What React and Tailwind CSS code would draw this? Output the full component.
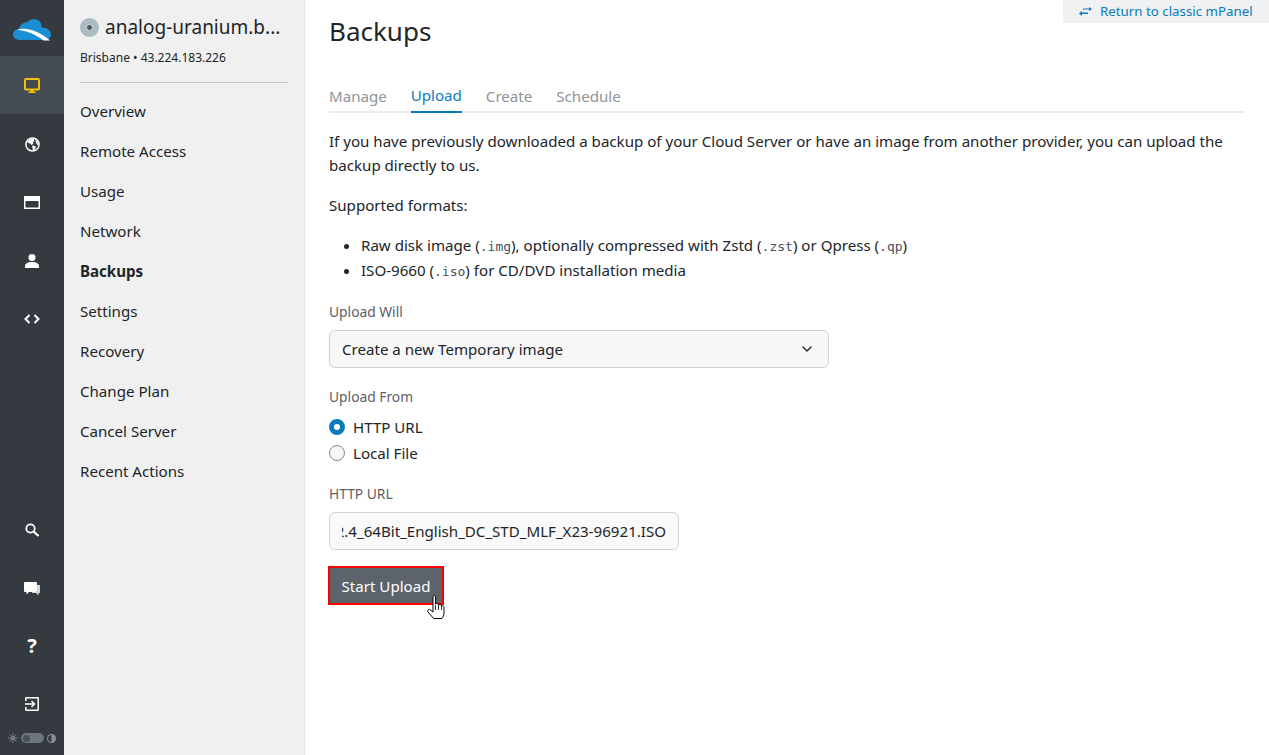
import React from "react";
import { ChevronDown } from "lucide-react";

const font = { fontFamily: '"Noto Sans", "Open Sans", sans-serif' };

const navItems = ["Overview", "Remote Access", "Usage", "Network", "Backups", "Settings", "Recovery", "Change Plan", "Cancel Server", "Recent Actions"];
const tabs = ["Manage", "Upload", "Create", "Schedule"];

function Cloud() {
  return (
    <svg width="38" height="22" viewBox="0 0 38 22">
      <path d="M7 21C2.5 21 0 18.5 0 15.5C0 12.5 2.5 10 6 10C7 5.5 10.5 3 14 3.5C16 .5 19.5 -.5 23 .5C27 1.5 29 5 28.5 8.5C33 8 38 11 38 15.5C38 19 35.5 21 32 21Z" fill="#1c8fd3" />
      <path d="M4 10.5C14 8 26 12 37 21.5L30.5 21.5C23 15.5 14 12 4 10.5Z" fill="#fff" />
    </svg>
  );
}

function Monitor() {
  return (
    <svg width="16" height="16" viewBox="0 0 16 16" fill="none">
      <rect x="1" y="1" width="14" height="10.5" rx="1" stroke="#f2c200" strokeWidth="2" />
      <path d="M6.5 12h3v1.5h2V15h-7v-1.5h2z" fill="#f2c200" />
    </svg>
  );
}

function Globe() {
  return (
    <svg width="15" height="15" viewBox="0 0 16 16">
      <circle cx="8" cy="8" r="7" fill="none" stroke="#fff" strokeWidth="1.6" />
      <path d="M5 2.5L9.5 2L10 4L8.5 5.5L9 7L7 8.5L5.5 7L3 6C3.2 4.5 4 3.3 5 2.5ZM7.5 9L11 9.5L11.5 11.5L9.5 14L8.5 14L8 11.5ZM12 3.5C13.5 5 14 7 14 9L12.5 7.5L11 4.5Z" fill="#fff" />
    </svg>
  );
}

function Card() {
  return (
    <svg width="16" height="13" viewBox="0 0 16 13" fill="none">
      <rect width="16" height="13" fill="#fff" />
      <rect x="1.5" y="5" width="13" height="6.5" fill="#343a40" />
    </svg>
  );
}

function Person() {
  return (
    <svg width="14" height="14" viewBox="0 0 14 14" fill="#fff">
      <circle cx="7" cy="3.5" r="3.5" />
      <path d="M0 14V12C0 9.5 3 8 7 8S14 9.5 14 12V14Z" />
    </svg>
  );
}

function Code() {
  return (
    <svg width="16" height="10" viewBox="0 0 16 10" fill="none" stroke="#fff" strokeWidth="2">
      <path d="M5.5 1L1.5 5L5.5 9" />
      <path d="M10.5 1L14.5 5L10.5 9" />
    </svg>
  );
}

function Search() {
  return (
    <svg width="14" height="14" viewBox="0 0 14 14" fill="none" stroke="#fff">
      <circle cx="5.5" cy="5.5" r="4.2" strokeWidth="1.8" />
      <path d="M8.5 8.5L13.5 13" strokeWidth="2.2" />
    </svg>
  );
}

function Chat() {
  return (
    <svg width="16" height="14" viewBox="0 0 16 14">
      <path d="M13 3H16V11H14.5V13.5L12 11H8V10H13Z" fill="#d9d4cc" />
      <path d="M0 1C0 .5 .5 0 1 0H12C12.5 0 13 .5 13 1V9C13 9.5 12.5 10 12 10H5L2.5 12.5V10H1C.5 10 0 9.5 0 9Z" fill="#fff" />
    </svg>
  );
}

function Exit() {
  return (
    <svg width="14" height="14" viewBox="0 0 14 14" fill="none" stroke="#fff" strokeWidth="1.5">
      <path d="M.8 4V1.2C.8 1 1 .8 1.2 .8H12.8C13 .8 13.2 1 13.2 1.2V12.8C13.2 13 13 13.2 12.8 13.2H1.2C1 13.2 .8 13 .8 12.8V10" />
      <path d="M0 7H9M6.5 4L9.5 7L6.5 10" />
    </svg>
  );
}

function Sun() {
  return (
    <svg width="10" height="10" viewBox="0 0 10 10" fill="#747a80" stroke="#747a80">
      <circle cx="5" cy="5" r="2.6" stroke="none" />
      <path d="M5 0V2M5 8V10M0 5H2M8 5H10M1.5 1.5L3 3M7 7L8.5 8.5M1.5 8.5L3 7M7 3L8.5 1.5" strokeWidth="1" />
    </svg>
  );
}

function Contrast() {
  return (
    <svg width="9" height="9" viewBox="0 0 9 9">
      <circle cx="4.5" cy="4.5" r="4.5" fill="#8a9097" />
      <path d="M4.5 1A3.5 3.5 0 0 0 4.5 8Z" fill="#343a40" />
    </svg>
  );
}

function Swap() {
  return (
    <svg width="13" height="9" viewBox="0 0 13 9" fill="#0a7cba" className="shrink-0">
      <path d="M4 1.5H10V0L13 2L10 4V2.5H4Z" />
      <path d="M9 5.5H3V4L0 6.5L3 9V7H9Z" />
    </svg>
  );
}

function Hand() {
  return (
    <svg width="18" height="24" viewBox="0 0 18 24">
      <path d="M6 1.5C6 .3 8.5 .3 8.5 1.5V9C9.5 8 11.5 8.5 11.5 10C12.5 9 14.5 9.5 14.5 11C15.5 10.5 17 11 17 12.5V18C17 20 16 22 15 23.5H6.5C5 21 3 19.5 1 17C0 15.5 1.5 13.5 3.5 15L6 17Z" fill="#fff" stroke="#000" strokeWidth="1" />
      <path d="M8.5 10V15M11.5 10V15M14.5 11V15" stroke="#000" strokeWidth=".8" />
    </svg>
  );
}

function RailItem({ active, children }) {
  return (
    <div className={`h-[58px] flex items-center justify-center ${active ? "bg-[#454b53]" : ""}`}>
      {children}
    </div>
  );
}

function Mono({ children }) {
  return <code className="font-['DejaVu_Sans_Mono'] text-[13px] leading-none text-[#495057]">{children}</code>;
}

export default function App() {
  return (
    <div className="flex h-[755px] overflow-hidden bg-white text-[#212529] text-[15.1px]" style={font}>
      {/* icon rail */}
      <div className="w-16 shrink-0 bg-[#343a40] flex flex-col justify-between">
        <div>
          <div className="h-14 flex items-center justify-center pt-[3px]"><Cloud /></div>
          <RailItem active><span className="pt-[2px] flex"><Monitor /></span></RailItem>
          <RailItem><span className="pt-[2px] flex"><Globe /></span></RailItem>
          <RailItem><span className="pt-[2px] flex"><Card /></span></RailItem>
          <RailItem><span className="pt-[4px] flex"><Person /></span></RailItem>
          <RailItem><span className="pt-[4px] flex"><Code /></span></RailItem>
        </div>
        <div>
          <RailItem><Search /></RailItem>
          <RailItem><span className="pt-[1px] flex"><Chat /></span></RailItem>
          <RailItem><span className="text-white font-bold text-[20px] leading-none">?</span></RailItem>
          <RailItem><Exit /></RailItem>
          <div className="h-[22px] flex items-center justify-center pb-[12px]">
            <Sun />
            <span className="ml-[3px] w-[23px] h-[10px] rounded-full bg-[#6c757d] flex items-center pl-[2px]">
              <span className="w-[7px] h-[7px] rounded-full bg-[#495057]" />
            </span>
            <span className="ml-[3px] flex"><Contrast /></span>
          </div>
        </div>
      </div>

      {/* server sidebar */}
      <div className="w-[241px] shrink-0 bg-[#f0f0f0] border-r border-[#e4e4e4] px-4 pt-[14px]">
        <div className="flex items-center gap-[6px] h-[26px]">
          <span className="w-[19px] h-[19px] rounded-full bg-[#a9bcc4] flex items-center justify-center">
            <span className="w-[7px] h-[7px] rounded-full bg-[#555] border border-[#ddd]" />
          </span>
          <span className="text-[19px] leading-none">analog-uranium.b...</span>
        </div>
        <div className="text-[12px] mt-[8px] leading-[20px]">Brisbane • 43.224.183.226</div>
        <div className="border-t border-[#c4c4c4] mt-[14px] w-[208px] mb-[8px]" />
        <nav>
          {navItems.map(item => (
            <div key={item} className={`h-10 flex items-center ${item === "Backups" ? "font-bold" : ""}`}>{item}</div>
          ))}
        </nav>
      </div>

      {/* main */}
      <div className="relative flex-1 px-6">
        <div className="absolute top-0 right-0 w-[206px] h-[23px] bg-[#eff1f3] flex items-center gap-2 pl-4 text-[#0a7cba] text-[13.3px]">
          <Swap />
          <span>Return to classic mPanel</span>
        </div>

        <h1 className="text-[26px] leading-[34px] mt-[14px] font-normal">Backups</h1>

        <div className="flex gap-6 mt-[32px] border-b-2 border-[#e9ecef] h-[33px]">
          {tabs.map(tab => (
            <div key={tab} className={`h-[33px] flex items-center ${tab === "Upload" ? "text-[#0a7cba] border-b-2 border-[#0a7cba]" : "text-[#8e9499]"}`}>{tab}</div>
          ))}
        </div>

        <p className="mt-[16px] leading-6 w-[916px]">If you have previously downloaded a backup of your Cloud Server or have an image from another provider, you can upload the backup directly to us.</p>
        <p className="mt-4 leading-6">Supported formats:</p>
        <ul className="mt-[16px] pl-8 list-disc leading-[25px]">
          <li>Raw disk image (<Mono>.img</Mono>), optionally compressed with Zstd (<Mono>.zst</Mono>) or Qpress (<Mono>.qp</Mono>)</li>
          <li>ISO-9660 (<Mono>.iso</Mono>) for CD/DVD installation media</li>
        </ul>

        <div className="mt-[19px] text-[13.8px] text-[#5c6166] leading-5">Upload Will</div>
        <div className="mt-[8px] w-[500px] h-[38px] bg-[#f7f7f7] border border-[#ced4da] rounded-md flex items-center justify-between pl-3 pr-[13px]">
          <span>Create a new Temporary image</span>
          <ChevronDown size={16} />
        </div>

        <div className="mt-[19px] text-[13.8px] text-[#5c6166] leading-5">Upload From</div>
        <div className="mt-[7px] flex items-center gap-2 h-[26px]">
          <span className="w-4 h-4 rounded-full border-[5px] border-[#0a7cba] bg-white" />
          <span>HTTP URL</span>
        </div>
        <div className="flex items-center gap-2 h-[26px]">
          <span className="w-4 h-4 rounded-full border border-[#8a8a8a] bg-[#f7f7f7]" />
          <span>Local File</span>
        </div>

        <div className="mt-[18px] text-[13.8px] text-[#5c6166] leading-5">HTTP URL</div>
        <div className="mt-[8px] w-[350px] h-[38px] bg-[#f9f9f9] border border-[#ced4da] rounded-md flex items-center px-3 whitespace-nowrap">
          <div className="flex-1 overflow-hidden flex justify-end">
            <span className="shrink-0">2012_R2.4_64Bit_English_DC_STD_MLF_X23-96921.ISO</span>
          </div>
        </div>

        <div className="relative mt-[16px] -ml-px w-[116px]">
          <div className="h-[39px] pt-px bg-[#5c636a] border-2 border-[#ff0000] text-white flex items-center justify-center">Start Upload</div>
          <div className="absolute left-[99px] top-[29px]"><Hand /></div>
        </div>
      </div>
    </div>
  );
}
